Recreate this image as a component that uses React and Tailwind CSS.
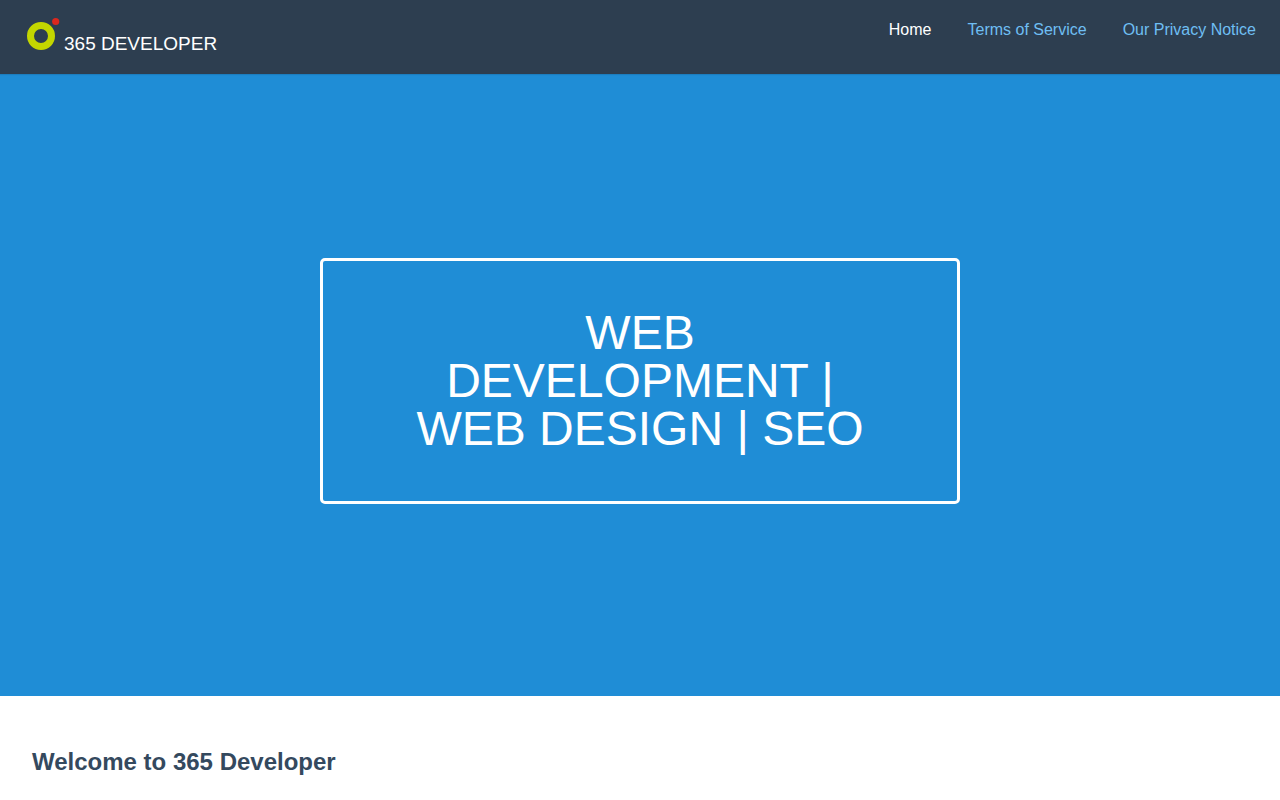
const NAV_LINKS = [
  { label: 'Home', href: '#home', active: true },
  { label: 'Terms of Service', href: '#terms' },
  { label: 'Our Privacy Notice', href: '#privacy' },
]

function Logo() {
  return (
    <svg className="w-9 h-9" viewBox="0 0 36 36" aria-hidden="true">
      <circle cx="17" cy="22" r="10.5" fill="none" stroke="#c3d600" strokeWidth="7" />
      <circle cx="31.7" cy="7.5" r="3.6" fill="#dc281e" />
    </svg>
  )
}

function Header() {
  return (
    <header className="relative flex items-start justify-between bg-[#2d3e50] px-6 pt-3.5 pb-5 shadow-[0_1px_1px_rgba(0,0,0,0.1)]">
      <a href="#home" className="flex items-baseline gap-1 text-white">
        <Logo />
        <span className="text-[19px] leading-5 uppercase">365 Developer</span>
      </a>
      <nav>
        <ul className="flex flex-wrap gap-x-9 pt-1">
          {NAV_LINKS.map((link) => (
            <li key={link.label}>
              <a
                href={link.href}
                className={'text-base leading-6 hover:text-white ' + (link.active ? 'text-white' : 'text-[#6fbef3]')}
              >
                {link.label}
              </a>
            </li>
          ))}
        </ul>
      </nav>
    </header>
  )
}

function Splash() {
  return (
    <section className="flex flex-1 items-center justify-center bg-[#1f8dd6] pb-2">
      <div className="w-1/2 rounded-[5px] border-[3px] border-white px-[77px] py-12">
        <h1 className="text-center text-5xl leading-12 text-white uppercase">
          Web Development | Web Design | SEO
        </h1>
      </div>
    </section>
  )
}

export default function App() {
  return (
    <div className="bg-white font-['Liberation_Sans',Arial,sans-serif]">
      <div className="flex min-h-[87vh] flex-col">
        <Header />
        <Splash />
      </div>
      <main className="px-8 pt-12">
        <h2 className="text-2xl leading-9 font-bold text-[#34495e]">Welcome to 365 Developer</h2>
      </main>
    </div>
  )
}
